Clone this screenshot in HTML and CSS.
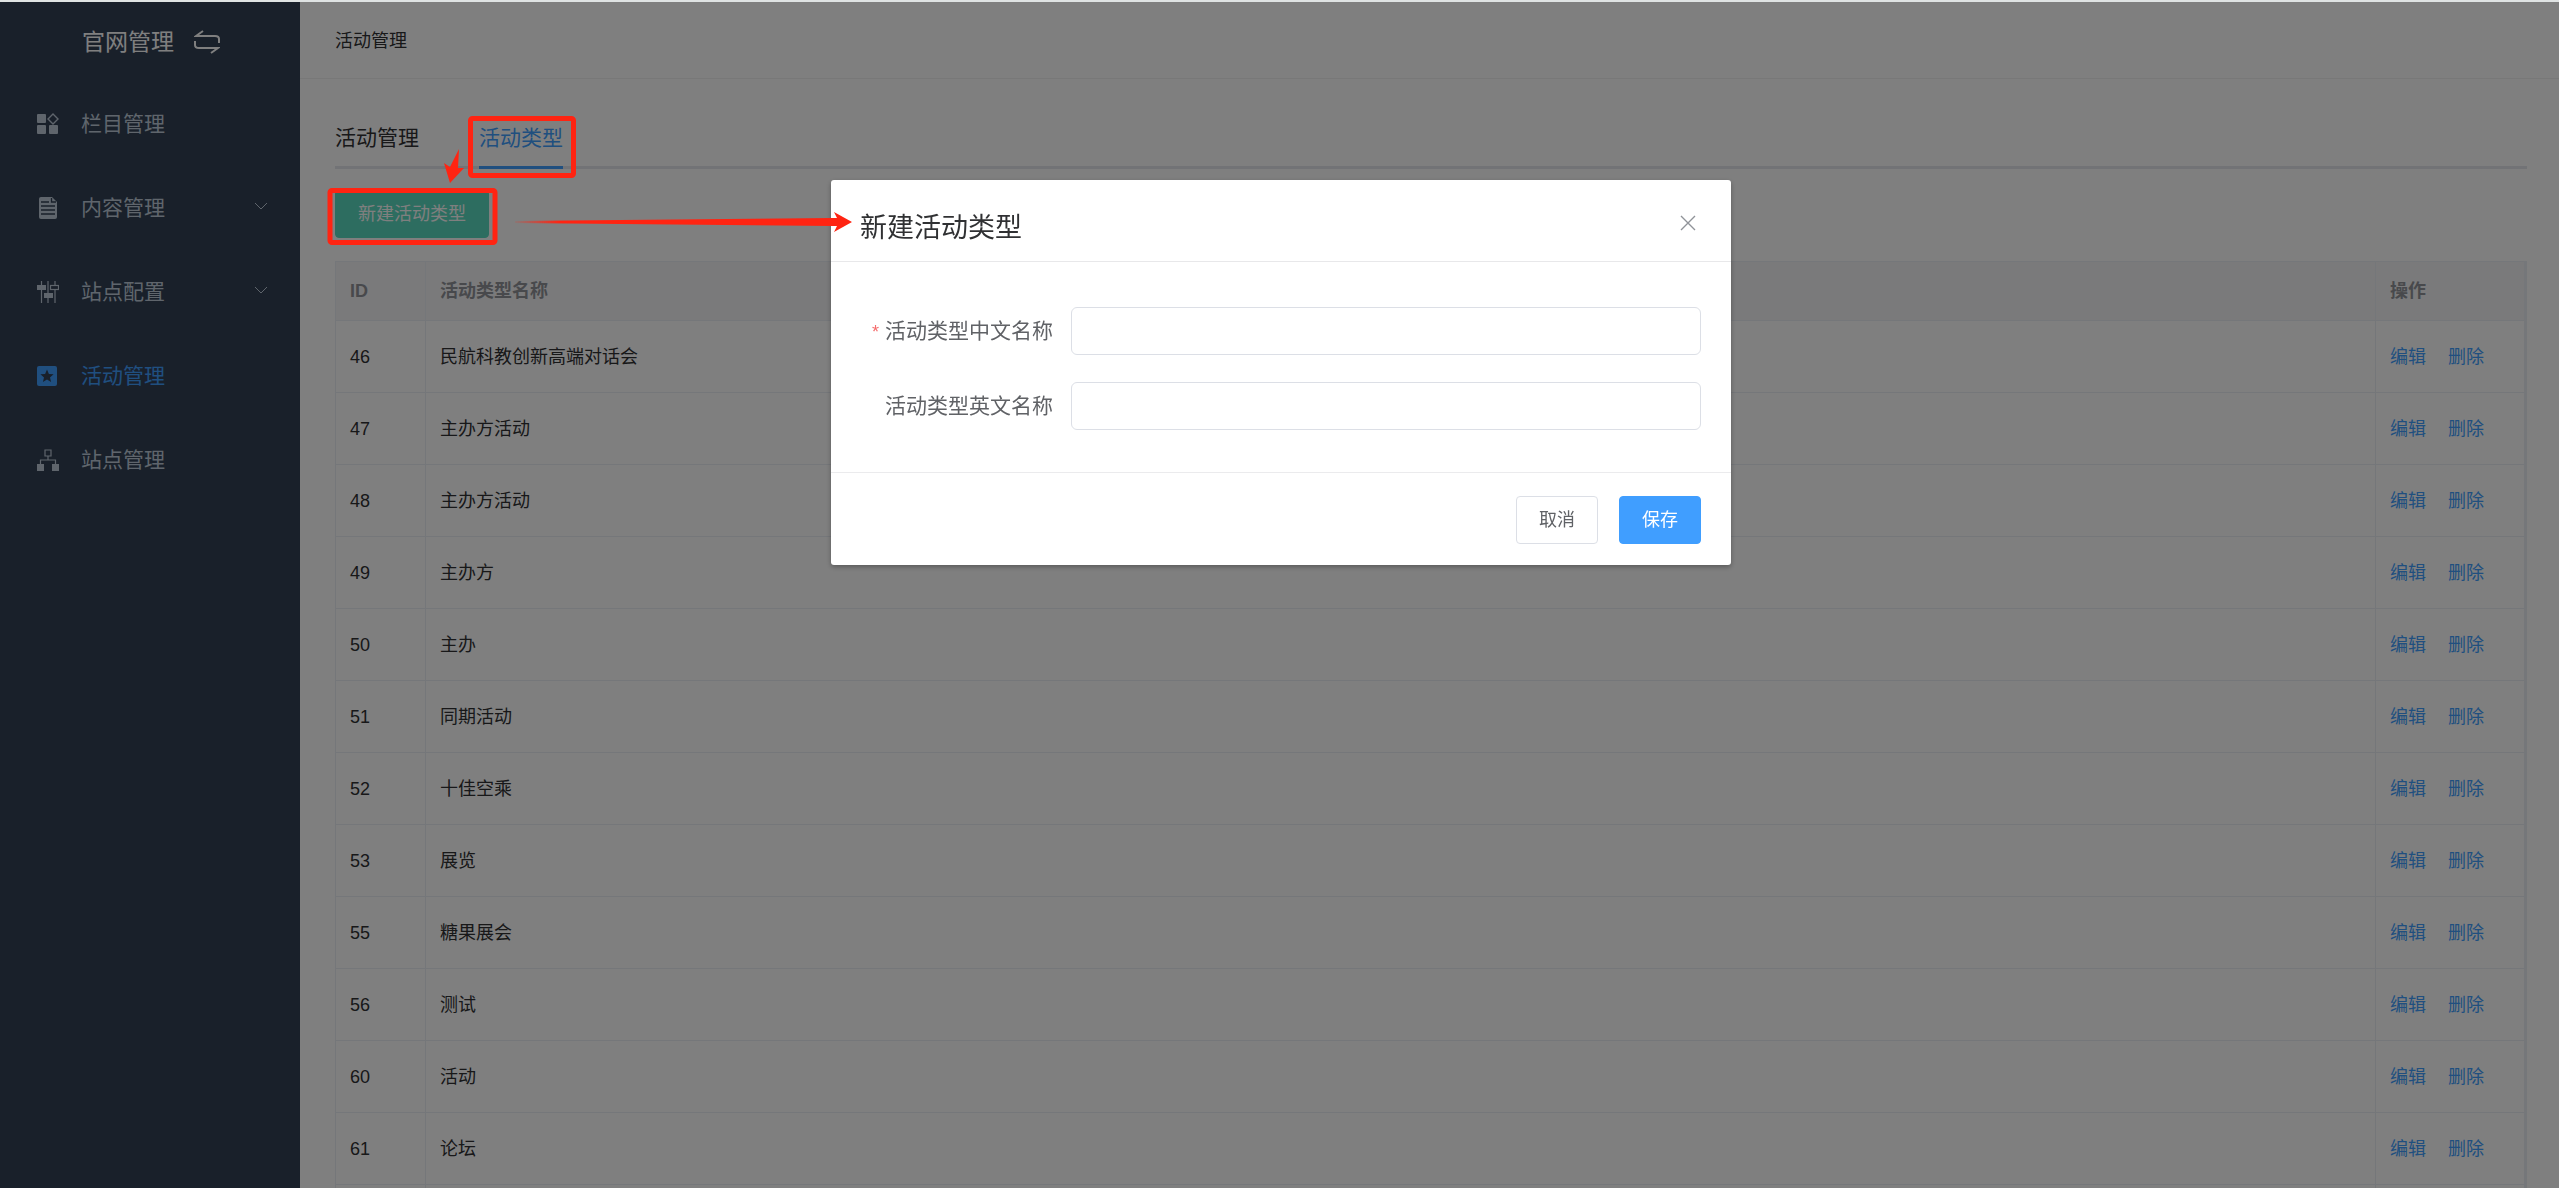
FILE: index.html
```html
<!DOCTYPE html>
<html lang="zh-CN">
<head>
    <meta charset="UTF-8">
    <meta name="viewport" content="width=device-width, initial-scale=1.0">
    <title>官网管理</title>
    <link rel="stylesheet" href="styles.css">
</head>
<body>
    <div class="app">
        <aside class="sidebar">
            <div class="logo">
                <span>官网管理</span>
                <svg class="logo-icon" viewBox="0 0 26 24" fill="none" stroke="currentColor" stroke-width="2">
                    <path d="M9 1 L2 6 H21 Q25 6 25 9 V13"/>
                    <path d="M17 23 L24 18 H5 Q1 18 1 15 V11"/>
                </svg>
            </div>
            <nav class="menu">
                <a class="menu-item" href="#">
                    <svg class="menu-icon" viewBox="0 0 22 22" fill="currentColor">
                        <rect x="0" y="1" width="9" height="9" rx="1"/>
                        <rect x="0" y="12" width="9" height="9" rx="1"/>
                        <rect x="12" y="12" width="9" height="9" rx="1"/>
                        <path d="M16 1 L21 6 L16 11 L11 6 Z" fill="none" stroke="currentColor" stroke-width="1.4"/>
                    </svg>
                    <span>栏目管理</span>
                </a>
                <a class="menu-item" href="#">
                    <svg class="menu-icon" viewBox="0 0 22 22">
                        <path d="M4 0 H15 L20 5 V20 Q20 22 18 22 H4 Q2 22 2 20 V2 Q2 0 4 0 Z" fill="currentColor"/>
                        <path d="M14.500 1 V5 H19 M4 5 H12 M4 9 H18 M4 13 H18 M4 17 H18" fill="none" stroke="#324054" stroke-width="1.3"/>
                    </svg>
                    <span>内容管理</span>
                    <svg class="menu-arrow" viewBox="0 0 14 12" fill="none" stroke="currentColor"><path d="M1 1 L7 7 L13 1"/></svg>
                </a>
                <a class="menu-item" href="#">
                    <svg class="menu-icon" viewBox="0 0 22 22" fill="currentColor">
                        <path d="M4.500 0 V22 M11 0 V22 M18 0 V4 M18 9 V22" stroke="currentColor" stroke-width="1.2"/>
                        <rect x="0" y="4" width="9" height="5"/>
                        <rect x="7" y="12" width="9" height="5"/>
                        <rect x="13.500" y="4.500" width="8" height="4" fill="none" stroke="currentColor" stroke-width="1.2"/>
                    </svg>
                    <span>站点配置</span>
                    <svg class="menu-arrow" viewBox="0 0 14 12" fill="none" stroke="currentColor"><path d="M1 1 L7 7 L13 1"/></svg>
                </a>
                <a class="menu-item active" href="#">
                    <svg class="menu-icon" viewBox="0 0 22 22">
                        <rect x="0" y="1" width="20" height="20" rx="2" fill="currentColor"/>
                        <path d="M10 4.500 L11.900 9 L16.600 9.300 L13 12.400 L14.100 17 L10 14.500 L5.900 17 L7 12.400 L3.400 9.300 L8.100 9 Z" fill="#324054"/>
                    </svg>
                    <span>活动管理</span>
                </a>
                <a class="menu-item" href="#">
                    <svg class="menu-icon" viewBox="0 0 22 22" fill="currentColor">
                        <path d="M8 1 H14 V7 H8 Z M11 7 V11 M3.500 15 V11 H18.500 V15" fill="none" stroke="currentColor" stroke-width="1.2"/>
                        <rect x="0" y="15" width="7" height="7"/>
                        <rect x="15" y="15" width="7" height="7"/>
                    </svg>
                    <span>站点管理</span>
                </a>
            </nav>
        </aside>

        <main class="main">
            <header class="topbar">活动管理</header>
            <div class="content">
                <nav class="tabs">
                    <a class="tab" href="#">活动管理</a>
                    <a class="tab active" href="#">活动类型</a>
                </nav>
                <div class="toolbar">
                    <button class="btn btn-create" type="button">新建活动类型</button>
                </div>
                <table class="table">
                    <thead>
                        <tr><th class="col-id">ID</th><th>活动类型名称</th><th class="col-ops">操作</th></tr>
                    </thead>
                    <tbody>
                        <tr><td>46</td><td>民航科教创新高端对话会</td><td><a href="#">编辑</a><a href="#">删除</a></td></tr>
                        <tr><td>47</td><td>主办方活动</td><td><a href="#">编辑</a><a href="#">删除</a></td></tr>
                        <tr><td>48</td><td>主办方活动</td><td><a href="#">编辑</a><a href="#">删除</a></td></tr>
                        <tr><td>49</td><td>主办方</td><td><a href="#">编辑</a><a href="#">删除</a></td></tr>
                        <tr><td>50</td><td>主办</td><td><a href="#">编辑</a><a href="#">删除</a></td></tr>
                        <tr><td>51</td><td>同期活动</td><td><a href="#">编辑</a><a href="#">删除</a></td></tr>
                        <tr><td>52</td><td>十佳空乘</td><td><a href="#">编辑</a><a href="#">删除</a></td></tr>
                        <tr><td>53</td><td>展览</td><td><a href="#">编辑</a><a href="#">删除</a></td></tr>
                        <tr><td>55</td><td>糖果展会</td><td><a href="#">编辑</a><a href="#">删除</a></td></tr>
                        <tr><td>56</td><td>测试</td><td><a href="#">编辑</a><a href="#">删除</a></td></tr>
                        <tr><td>60</td><td>活动</td><td><a href="#">编辑</a><a href="#">删除</a></td></tr>
                        <tr><td>61</td><td>论坛</td><td><a href="#">编辑</a><a href="#">删除</a></td></tr>
                        <tr><td></td><td></td><td></td></tr>
                    </tbody>
                </table>
            </div>
        </main>
    </div>

    <div class="mask">
        <form class="dialog" role="dialog" aria-labelledby="dialog-title">
            <div class="dialog-header">
                <h2 id="dialog-title">新建活动类型</h2>
                <button class="dialog-close" type="button" aria-label="关闭">
                    <svg viewBox="0 0 16 16" fill="none" stroke="currentColor" stroke-width="1.4"><path d="M1 1 L15 15 M15 1 L1 15"/></svg>
                </button>
            </div>
            <div class="dialog-body">
                <div class="field">
                    <label class="required" for="name-cn">活动类型中文名称</label>
                    <input type="text" id="name-cn" required>
                </div>
                <div class="field">
                    <label for="name-en">活动类型英文名称</label>
                    <input type="text" id="name-en">
                </div>
            </div>
            <div class="dialog-footer">
                <button class="btn" type="button">取消</button>
                <button class="btn btn-primary" type="button">保存</button>
            </div>
        </form>
    </div>

    <!-- red step markers -->
    <svg class="marks" viewBox="320 110 540 140" fill="#ff2412">
        <defs>
            <linearGradient id="fade" gradientUnits="userSpaceOnUse" x1="510" y1="0" x2="560" y2="0">
                <stop offset="0" stop-color="#ff2412" stop-opacity="0"/>
                <stop offset="1" stop-color="#ff2412"/>
            </linearGradient>
        </defs>
        <rect x="470.500" y="118.500" width="103" height="57" rx="2" fill="none" stroke="#ff2412" stroke-width="5"/>
        <rect x="330" y="190.500" width="165" height="52" rx="2" fill="none" stroke="#ff2412" stroke-width="5"/>
        <path d="M459 149 L458 168 L464 168 L450 183 L444 163 L450 167 Z"/>
        <path d="M515 221 L837 218 L834 212 L852 222 L834 232 L837 226 L515 223 Z" fill="url(#fade)"/>
    </svg>
</body>
</html>
```

FILE: styles.css
```css
* {
    box-sizing: border-box;
}
body {
    margin: 0;
    height: 100vh;
    overflow: hidden;
    border-top: 2px solid #dfe3e3;
    font-family: "Liberation Sans", "Noto Sans CJK SC", sans-serif;
    font-size: 18px;
    line-height: 24px;
    color: #303133;
    background-color: #ffffff;
}
a {
    text-decoration: none;
    color: inherit;
}
button, input {
    font: inherit;
}
.app {
    display: flex;
    height: 100%;
}

/* sidebar */
.sidebar {
    flex: none;
    width: 300px;
    background-color: #324054;
    color: #bfcbd9;
}
.logo {
    display: flex;
    align-items: center;
    gap: 20px;
    height: 80px;
    padding-left: 82px;
    font-size: 23px;
    color: #ffffff;
}
.logo-icon {
    width: 26px;
    height: 24px;
}
.menu-item {
    display: flex;
    align-items: center;
    gap: 22px;
    height: 84px;
    padding: 0 32px 0 37px;
    font-size: 21px;
}
.menu-item.active {
    color: #409eff;
}
.menu-icon {
    width: 22px;
    height: 22px;
}
.menu-arrow {
    width: 14px;
    height: 12px;
    margin-left: auto;
}

/* main area */
.main {
    flex: 1;
    min-width: 0;
    overflow: hidden;
}
.topbar {
    display: flex;
    align-items: center;
    height: 77px;
    padding: 2px 0 0 35px;
    border-bottom: 1px solid #f0f0f0;
}
.content {
    padding: 47px 32px 0 35px;
}
.tabs {
    display: flex;
    gap: 60px;
    border-bottom: 3px solid #e4e7ed;
    font-size: 21px;
}
.tab {
    padding-bottom: 16px;
    margin-bottom: -3px;
    border-bottom: 3px solid transparent;
}
.tab.active {
    color: #409eff;
    border-color: #409eff;
}
.toolbar {
    display: flex;
    margin: 21px 0 23px;
}
.btn {
    height: 48px;
    padding: 0 22px;
    border: 1px solid #dcdfe6;
    border-radius: 4px;
    background-color: #ffffff;
    color: #606266;
    cursor: pointer;
}
.btn-create {
    border-color: #5adac0;
    background-color: #5adac0;
    color: #ffffff;
}
.btn-primary {
    border-color: #409eff;
    background-color: #409eff;
    color: #ffffff;
}
.table {
    width: 100%;
    table-layout: fixed;
    border-spacing: 0;
    border: 1px solid #ebeef5;
    border-width: 1px 3px 0 1px;
}
.table th, .table td {
    height: 72px;
    padding: 0 15px 0 14px;
    border-bottom: 1px solid #ebeef5;
    border-right: 1px solid #ebeef5;
    text-align: left;
}
.table th {
    height: 59px;
    background-color: #f5f5f6;
    color: #909399;
    font-weight: 700;
}
.table th:last-child, .table td:last-child {
    border-right: none;
}
.table .col-id {
    width: 90px;
}
.table .col-ops {
    width: 148px;
}
.table td a {
    margin-right: 22px;
    color: #409eff;
}

/* dialog */
.mask {
    position: fixed;
    inset: 2px 0 0;
    padding: 178px 0 0 3px;
    background-color: rgba(0, 0, 0, 0.5);
}
.dialog {
    width: 900px;
    max-width: 100%;
    margin: 0 auto;
    background-color: #ffffff;
    border-radius: 3px;
    box-shadow: 0 2px 5px rgba(0, 0, 0, 0.3);
}
.dialog-header {
    display: flex;
    justify-content: space-between;
    padding: 32px 35px 16px 29px;
    border-bottom: 1px solid #e8e8ea;
}
.dialog-header h2 {
    margin: 0;
    font-size: 27px;
    font-weight: 400;
    line-height: 33px;
}
.dialog-close {
    width: 16px;
    height: 22px;
    padding: 0;
    border: none;
    background: none;
    color: #909399;
    cursor: pointer;
}
.dialog-close svg {
    display: block;
    width: 16px;
    height: 16px;
}
.dialog-body {
    display: flex;
    flex-direction: column;
    gap: 27px;
    padding: 45px 30px 42px;
}
.field {
    display: flex;
    align-items: center;
    gap: 18px;
}
.field label {
    width: 192px;
    font-size: 21px;
    text-align: right;
    color: #606266;
}
.field .required::before {
    content: "*";
    margin-right: 6px;
    font-size: 18px;
    color: #f56c6c;
}
.field input {
    flex: 1;
    height: 48px;
    padding: 0 22px;
    border: 1px solid #dcdfe6;
    border-radius: 6px;
}
.dialog-footer {
    display: flex;
    justify-content: flex-end;
    gap: 21px;
    padding: 23px 30px 21px;
    border-top: 1px solid #ebebed;
}

/* markers drawn over the page */
.marks {
    position: absolute;
    left: 320px;
    top: 110px;
    width: 540px;
    height: 140px;
    pointer-events: none;
}
```
